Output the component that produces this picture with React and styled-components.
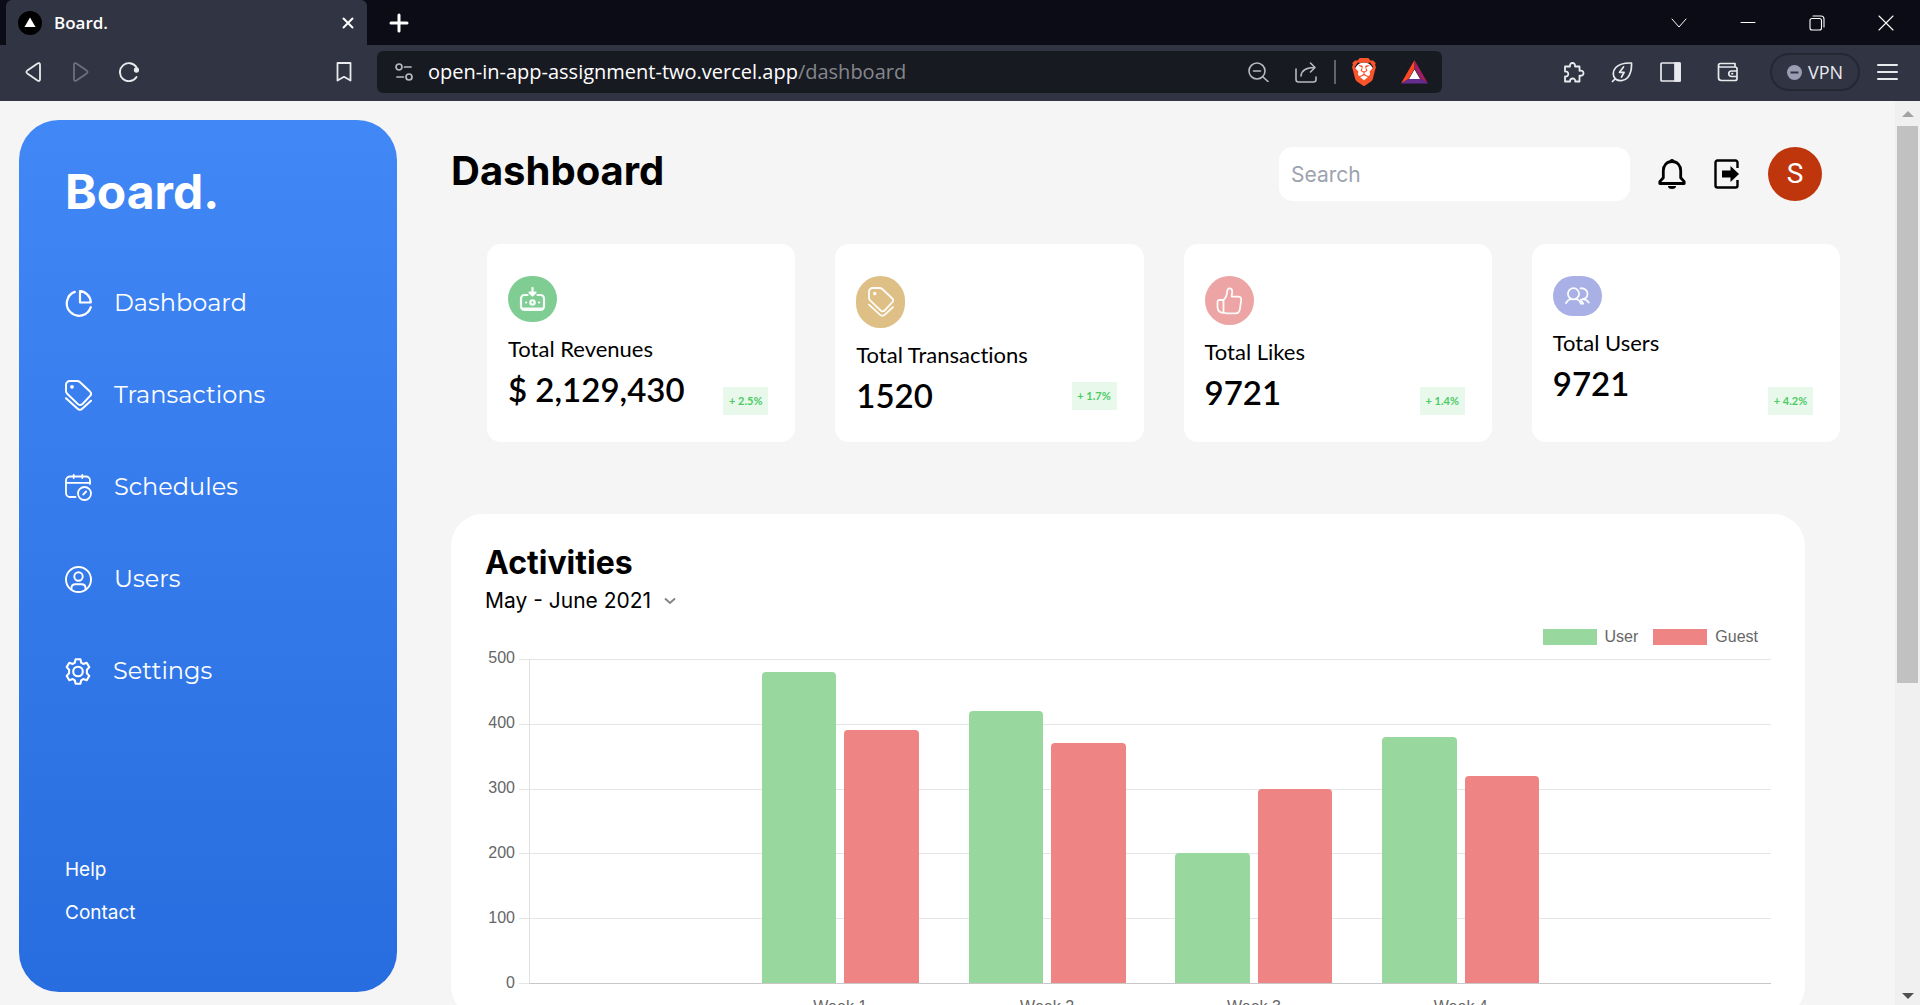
import React from "react";
import styled, { createGlobalStyle } from "styled-components";
import { SiBrave } from "react-icons/si";

const GlobalStyle = createGlobalStyle`
  *, *::before, *::after { box-sizing: border-box; }
  html, body { margin: 0; padding: 0; }
  body { font-family: Inter, sans-serif; color: #000; background: #f5f5f5; }
  button { border: 0; padding: 0; background: none; color: inherit; font: inherit; cursor: pointer; }
  h1, h2, p, ul { margin: 0; padding: 0; }
  svg { display: block; flex: none; }
`;

/* ---------- browser window ---------- */

const Window = styled.div`
  display: flex;
  flex-direction: column;
  height: 100vh;
  overflow: hidden;
`;

const TabStrip = styled.div`
  display: flex;
  align-items: stretch;
  height: 45px;
  flex: none;
  padding-left: 6px;
  background: #0b0c15;
  color: #fff;
`;

const Tab = styled.div`
  display: flex;
  align-items: center;
  width: 361px;
  padding: 0 7px 0 12px;
  border-radius: 6px 6px 0 0;
  background: #313442;
  font: 600 17px/24px "Open Sans", "Noto Sans", sans-serif;
`;

const TabTitle = styled.span`
  flex: 1;
  padding-left: 12px;
`;

const StripButton = styled.button`
  display: flex;
  align-items: center;
  justify-content: center;
  width: ${(p) => p.$width}px;
`;

const WindowControls = styled.div`
  display: flex;
  margin-left: auto;
`;

const Toolbar = styled.div`
  display: flex;
  align-items: center;
  height: 56px;
  flex: none;
  padding-bottom: 2px;
  background: #313442;
  color: #e9eaee;
`;

const ToolGroup = styled.div`
  display: flex;
  align-items: center;
  padding: 0 9px;
  width: ${(p) => p.$width}px;
  justify-content: ${(p) => p.$justify};
`;

const ToolSet = styled.div`
  display: flex;
  align-items: center;
  margin-right: ${(p) => p.$after || 0}px;
`;

const ToolButton = styled.button`
  display: flex;
  align-items: center;
  justify-content: center;
  width: 48px;
  height: 40px;
  color: ${(p) => p.$color || "inherit"};
`;

const AddressBar = styled.div`
  display: flex;
  align-items: center;
  flex: 1;
  height: 42px;
  padding: 0 4px 0 17px;
  border-radius: 6px;
  background: #181a22;
  color: #b9bac0;
`;

const Address = styled.div`
  flex: 1;
  padding-left: 14px;
  color: #fff;
  font: 400 20px/28px "Open Sans", "Noto Sans", sans-serif;
  white-space: nowrap;
`;

const AddressPath = styled.span`
  color: #85878d;
`;

const Divider = styled.span`
  width: 2px;
  height: 24px;
  margin: 0 4px;
  background: #62646b;
`;

const VpnButton = styled.button`
  display: flex;
  align-items: center;
  justify-content: center;
  gap: 6px;
  width: 90px;
  height: 38px;
  margin-right: 3px;
  border: 2px solid #252733;
  border-radius: 19px;
  font: 400 18px/24px "Open Sans", "Noto Sans", sans-serif;
`;

const Viewport = styled.div`
  display: flex;
  flex: 1;
  min-height: 0;
  background: #f5f5f5;
`;

const ScrollTrack = styled.div`
  display: flex;
  flex-direction: column;
  align-items: center;
  justify-content: space-between;
  width: 25px;
  flex: none;
  padding: 10px 2px 6px;
  background: #f0f0f0;
`;

const ScrollThumb = styled.div`
  width: 21px;
  height: 557px;
  margin: 9px 0 auto;
  background: #c1c1c1;
`;

/* ---------- sidebar ---------- */

const Sidebar = styled.aside`
  display: flex;
  flex-direction: column;
  width: 378px;
  flex: none;
  margin: 19px 0 13px 19px;
  padding: 42px 46px 67px;
  border-radius: 40px;
  background: linear-gradient(180deg, #4287f6 0%, #286ddf 100%);
  color: #fff;
`;

const Brand = styled.p`
  font-size: 48px;
  line-height: 60px;
  font-weight: 700;
`;

const Nav = styled.nav`
  display: flex;
  flex-direction: column;
  gap: 52px;
  margin-top: 61px;
`;

const NavLink = styled.a`
  display: flex;
  align-items: center;
  gap: 22px;
  height: 40px;
  color: #fff;
  text-decoration: none;
  font: 400 24px/40px Montserrat, Inter, sans-serif;
`;

const FootLinks = styled.div`
  display: flex;
  flex-direction: column;
  gap: 19px;
  margin-top: auto;
`;

const FootLink = styled.a`
  color: #fff;
  text-decoration: none;
  font-size: 19px;
  line-height: 24px;
`;

/* ---------- main column ---------- */

const Main = styled.main`
  flex: 1;
  min-width: 0;
  padding: 46px 0 0 54px;
`;

const Header = styled.header`
  display: flex;
  align-items: flex-start;
  justify-content: space-between;
  padding-right: 73px;
`;

const PageTitle = styled.h1`
  font-size: 40px;
  line-height: 48px;
  font-weight: 700;
`;

const HeaderTools = styled.div`
  display: flex;
  align-items: center;
  gap: 28px;
`;

const SearchBox = styled.input`
  width: 351px;
  height: 54px;
  padding: 0 12px;
  border: 0;
  border-radius: 14px;
  background: #fff;
  font: 400 21px/32px Inter, sans-serif;
  &::placeholder { color: #9ca3af; opacity: 1; }
`;

const Avatar = styled.button`
  width: 54px;
  height: 54px;
  border-radius: 50%;
  background: #bf360c;
  color: #fff;
  font: 400 28px/54px Roboto, sans-serif;
`;

const Stats = styled.section`
  display: grid;
  grid-template-columns: repeat(4, 1fr);
  gap: 40px;
  margin: 43px 55px 0 36px;
`;

const StatCard = styled.article`
  display: flex;
  justify-content: space-between;
  min-height: 198px;
  padding: 32px 27px 20px 21px;
  border-radius: 14px;
  background: #fff;
  font-family: Lato, sans-serif;
  font-variant-ligatures: none;
`;

const StatIcon = styled.div`
  display: flex;
  align-items: center;
  justify-content: center;
  width: 49px;
  height: ${(p) => p.$height}px;
  margin-bottom: 13px;
  border-radius: 25px;
  background: ${(p) => p.$color};
  color: #fffffff0;
`;

const StatLabel = styled.p`
  font-size: 22px;
  line-height: 28px;
`;

const StatValue = styled.p`
  font-size: 33px;
  line-height: 52px;
  font-weight: 600;
`;

const Change = styled.span`
  align-self: flex-end;
  margin-bottom: ${(p) => (p.$raised ? 12 : 7)}px;
  width: 45px;
  color: #4ccb65;
  background: #e8f8eb;
  font-size: 11px;
  line-height: 28px;
  font-weight: 700;
  text-align: center;
`;

const Activities = styled.section`
  margin: 72px 90px 0 0;
  padding: 29px 34px 0;
  border-radius: 32px;
  background: #fff;
`;

const SectionTitle = styled.h2`
  font-size: 32px;
  line-height: 40px;
  font-weight: 700;
`;

const Period = styled.label`
  display: flex;
  align-items: center;
  gap: 12px;
  width: fit-content;
  height: 36px;
`;

const PeriodSelect = styled.select`
  appearance: none;
  padding: 0;
  border: 0;
  background: none;
  color: #000;
  font: 400 21px/36px Inter, sans-serif;
`;

const Legend = styled.ul`
  display: flex;
  justify-content: flex-end;
  gap: 15px;
  margin-top: 6px;
  padding-right: 13px;
  list-style: none;
  color: #666;
  font: 400 16px/24px "Liberation Sans", Arial, sans-serif;
`;

const LegendItem = styled.li`
  display: flex;
  align-items: center;
  gap: 8px;
  &::before {
    content: "";
    width: 54px;
    height: 16px;
    background: ${(p) => p.$color};
  }
`;

const Chart = styled.div`
  display: grid;
  grid-template-columns: 30px 1fr;
  column-gap: 4px;
  margin-top: 10px;
  color: #666;
  font: 400 16px/20px "Liberation Sans", Arial, sans-serif;
`;

const Scale = styled.div`
  display: flex;
  flex-direction: column;
  justify-content: space-between;
  margin: -11px 0 -9px;
  text-align: right;
`;

const Plot = styled.div`
  display: grid;
  height: 325px;
`;

const GridLines = styled.div`
  grid-area: 1 / 1;
  display: flex;
  flex-direction: column;
  border-bottom: 1px solid #e5e5e5;
`;

const GridLine = styled.div`
  flex: 1;
  border-top: 1px solid #e5e5e5;
`;

const Weeks = styled.div`
  grid-area: 1 / 1;
  z-index: 1;
  display: grid;
  grid-template-columns: repeat(6, 1fr);
  margin-left: 10px;
  border-left: 1px solid #e0e0e0;
  border-bottom: 1px solid #c8c8c8;
`;

const Week = styled.div`
  display: flex;
  align-items: flex-end;
  gap: 8px;
  padding: 0 25px;
`;

const Bar = styled.div`
  flex: 1;
  border-radius: 4px 4px 0 0;
  background: ${(p) => p.$color};
`;

const WeekNames = styled.div`
  grid-column: 2;
  display: grid;
  grid-template-columns: repeat(6, 1fr);
  margin: 12px 0 0 11px;
  line-height: 22px;
  text-align: center;
`;

/* ---------- drawings ---------- */

const Icon = ({ w = 24, h = 24, box, sw = 2, children }) => (
  <svg width={w} height={h} viewBox={box || `0 0 ${w} ${h}`} fill="none" stroke="currentColor"
    strokeWidth={sw} strokeLinecap="round" strokeLinejoin="round" aria-hidden="true">
    {children}
  </svg>
);

const PieIcon = () => (
  <Icon w={27} h={27} sw={2.2}>
    <path d="M9.8 1.9A12.3 12.3 0 1 0 25.8 17.2" />
    <path d="M15 1.2c5.6.4 10.6 5 10.8 11.3H15Z" />
  </Icon>
);

const TagIcon = ({ w = 27, h = 31, sw = 2 }) => (
  <Icon w={w} h={h} box="0 0 27 31" sw={sw}>
    <path d="M1 4.8A3.8 3.8 0 0 1 4.8 1H12c1.200 0 2 .3 2.800 1L25 11.600c1.300 1.300 1.400 3 .1 4.300L17.800 23.800c-1.600 1.600-3.600 1.600-5.100.1L2.200 13.800C1.400 13 1 12.200 1 11.100Z" />
    <path d="M1 18.200 12.300 28.600c1.600 1.500 3.600 1.500 5.200 0L26 20.800" />
    <circle cx="7" cy="6.8" r="0.9" fill="currentColor" />
  </Icon>
);

const CalendarIcon = () => (
  <Icon w={27} h={27} sw={1.8}>
    <path d="M25 10V6.500a4 4 0 0 0-4-4H5a4 4 0 0 0-4 4V19a4 4 0 0 0 4 4h5.500M1 8.800h24M8.700 1v3M17.300 1v3" />
    <circle cx="19.500" cy="19.500" r="6.500" />
    <path d="m18.200 20.500 3-3" />
  </Icon>
);

const UserIcon = () => (
  <Icon w={27} h={27} sw={1.9}>
    <circle cx="13.500" cy="13.500" r="12.500" />
    <circle cx="13.500" cy="10.500" r="4.200" />
    <path d="M6.500 23.500V22c0-2.400 1.600-3.800 3.800-3.800h6.400c2.200 0 3.800 1.400 3.800 3.800v1.500" />
  </Icon>
);

const GearIcon = () => (
  <Icon w={26} h={27} sw={2.1}>
    <path d="M10.600 1.200h4.800l.8 3.500 2 1.200 3.500-1.100 2.600 4.300-2.400 2.600v3.600l2.400 2.600-2.600 4.300-3.500-1.100-2 1.200-.8 3.500h-4.800l-.8-3.500-2-1.200-3.500 1.100L1.700 17.900l2.400-2.600v-3.600L1.700 9.100l2.600-4.300 3.500 1.100 2-1.200Z" />
    <circle cx="13" cy="13.500" r="4.800" />
  </Icon>
);

const CashIcon = () => (
  <Icon w={27} h={25} sw={2.2}>
    <path d="M8.500 8H5.500A3.500 3.500 0 0 0 2 11.500v8A3.500 3.500 0 0 0 5.500 23h16a3.500 3.500 0 0 0 3.500-3.500v-8A3.500 3.500 0 0 0 21.500 8h-3M3.500 21.500h20" />
    <path d="M13.500 1v6" />
    <path d="m10.500 5.500 3 3 3-3Z" fill="currentColor" />
    <circle cx="13.500" cy="15.500" r="2.200" />
    <path d="M7 15.500h.2M20 15.500h.2" />
  </Icon>
);

const ThumbIcon = () => (
  <Icon w={27} h={28} sw={1.8}>
    <path d="M7.500 13c3-2 3.300-5 3.700-8.500.2-2 1-3.200 2.400-3.200 1.800 0 2.600 1.300 2.600 3.300 0 1.800-.5 3.400-.5 5h6.500c2.200 0 3.300 1.500 3 3.500l-1.300 9c-.4 2.700-1.800 4.200-4.400 4.200H11c-1.500 0-2.500-.3-3.500-1Z" />
    <path d="M7.500 13H3.200c-1.200 0-1.700.7-1.700 1.800v5c0 3.400 2 6 6 6" />
  </Icon>
);

const PeopleIcon = () => (
  <Icon w={25} h={18} sw={1.8}>
    <circle cx="8.500" cy="6.800" r="5.600" />
    <path d="M1 16c1-2 2.700-3.400 5-4M16.200 16.800c-1-2.300-2.800-4-5.200-4.800M15.500 1.300c4.400-.3 7 2.300 7 5.500s-1.900 5.200-5 5.400c3.100.1 4.900 1.300 6.300 3.300M15.800 12.600l2.400 4.200" />
  </Icon>
);

const BellIcon = () => (
  <svg width="28" height="30" viewBox="0 0 28 30" aria-hidden="true">
    <path d="M14 2.500c-5.200 0-8.700 3.900-8.700 9v7.200L1.800 22.600v1.900h24.400v-1.900l-3.500-3.900v-7.200c0-5.100-3.500-9-8.700-9Z" fill="none" stroke="#000" strokeWidth="2.800" strokeLinejoin="round" />
    <path d="M11.500 2.500a2.500 2.500 0 0 1 5 0ZM10 27h8a4 3 0 0 1-8 0Z" />
  </svg>
);

const ExitIcon = () => (
  <svg width="26" height="30" viewBox="0 0 26 30" aria-hidden="true">
    <path d="M23.500 9V3.500a2 2 0 0 0-2-2h-18a2 2 0 0 0-2 2v23a2 2 0 0 0 2 2h18a2 2 0 0 0 2-2V21" fill="none" stroke="#000" strokeWidth="2.4" />
    <path d="M8 11.500h8.500V7L25 15l-8.500 8v-4.500H8Z" />
  </svg>
);

const Brave = styled.span`
  display: flex;
  color: #fb542b;
  svg { background: radial-gradient(circle at 50% 50%, #fff 0 9px, transparent 10px); }
`;

const ScrollArrow = ({ down, color }) => (
  <svg width="12" height="6" viewBox="0 0 12 6" fill={color} aria-hidden="true">
    <path d={down ? "M0 0h12L6 6Z" : "M0 6h12L6 0Z"} />
  </svg>
);

/* ---------- content ---------- */

const NAV = [
  ["Dashboard", PieIcon],
  ["Transactions", TagIcon],
  ["Schedules", CalendarIcon],
  ["Users", UserIcon],
  ["Settings", GearIcon],
];

const STATS = [
  { label: "Total Revenues", value: "$ 2,129,430", change: "+ 2.5%", color: "#7fcd93", height: 46, icon: <CashIcon /> },
  { label: "Total Transactions", value: "1520", change: "+ 1.7%", color: "#debf85", height: 52, icon: <TagIcon w={26} h={30} sw={1.9} />, raised: true },
  { label: "Total Likes", value: "9721", change: "+ 1.4%", color: "#eca4a4", height: 49, icon: <ThumbIcon /> },
  { label: "Total Users", value: "9721", change: "+ 4.2%", color: "#a9b0e5", height: 40, icon: <PeopleIcon /> },
];

const USER = "#98d89e";
const GUEST = "#ee8484";
const MAX = 500;
const ACTIVITY = [
  { name: "" },
  { name: "Week 1", user: 480, guest: 390 },
  { name: "Week 2", user: 420, guest: 370 },
  { name: "Week 3", user: 200, guest: 300 },
  { name: "Week 4", user: 380, guest: 320 },
  { name: "" },
];

const percent = (v) => ({ height: `${(v / MAX) * 100}%` });

function BrowserTop() {
  return (
    <>
      <TabStrip>
        <Tab>
          <svg width="24" height="24" viewBox="0 0 24 24" aria-hidden="true">
            <circle cx="12" cy="12" r="12" fill="#000" />
            <path d="M12 6.500 17.500 16h-11Z" fill="#fff" />
          </svg>
          <TabTitle>Board.</TabTitle>
          <StripButton $width={24} aria-label="Close tab">
            <Icon w={12} h={12}><path d="m1.500 1.500 9 9m0-9-9 9" /></Icon>
          </StripButton>
        </Tab>
        <StripButton $width={64} aria-label="New tab">
          <Icon w={20} h={20} sw={3}><path d="M10 2v16M2 10h16" /></Icon>
        </StripButton>
        <WindowControls>
          <StripButton $width={69} aria-label="Search tabs">
            <Icon w={16} h={10} sw={1}><path d="m1 1 7 8 7-8" /></Icon>
          </StripButton>
          <StripButton $width={69} aria-label="Minimize">
            <Icon w={16} h={3} sw={1}><path d="M1 1.500h14" /></Icon>
          </StripButton>
          <StripButton $width={69} aria-label="Restore">
            <Icon w={16} h={16} sw={1.1}>
              <rect x="1" y="3.500" width="11.500" height="11.500" rx="2" />
              <path d="M4 1h8a3 3 0 0 1 3 3v8" />
            </Icon>
          </StripButton>
          <StripButton $width={69} aria-label="Close window">
            <Icon w={16} h={16} sw={1.1}><path d="m1 1 14 14M15 1 1 15" /></Icon>
          </StripButton>
        </WindowControls>
      </TabStrip>
      <Toolbar>
        <ToolGroup $width={377} $justify="space-between">
          <ToolSet>
            <ToolButton aria-label="Back">
              <Icon w={16} h={20} sw={1.8}><path d="M12.500 1.500 2.300 8.600c-1.200.9-1.200 1.900 0 2.800L12.500 18.500c1.400.9 2.500.4 2.500-1.200V2.700c0-1.600-1.100-2.100-2.500-1.200Z" /></Icon>
            </ToolButton>
            <ToolButton aria-label="Forward" $color="#6d707c">
              <Icon w={16} h={20} sw={1.8}><path d="M3.500 1.500 13.700 8.600c1.200.9 1.200 1.900 0 2.800L3.500 18.500C2.100 19.400 1 18.900 1 17.300V2.700C1 1.100 2.100.6 3.500 1.500Z" /></Icon>
            </ToolButton>
            <ToolButton aria-label="Reload">
              <Icon w={20} h={20} sw={1.9}>
                <path d="M17.500 5.300A9 9 0 1 0 17.500 15" />
                <circle cx="17.500" cy="8" r="1.700" fill="currentColor" />
              </Icon>
            </ToolButton>
          </ToolSet>
          <ToolButton aria-label="Bookmark">
            <Icon w={16} h={20} sw={1.8}><path d="M1.500 1h13v17.500L8 14.800l-6.500 3.700Z" /></Icon>
          </ToolButton>
        </ToolGroup>
        <AddressBar>
          <Icon w={20} h={18} sw={1.7}>
            <circle cx="5" cy="4" r="3" /><path d="M10.500 4H17" />
            <circle cx="15" cy="14" r="3" /><path d="M3 14h6.500" />
          </Icon>
          <Address>open-in-app-assignment-two.vercel.app<AddressPath>/dashboard</AddressPath></Address>
          <ToolButton aria-label="Zoom">
            <Icon w={21} h={20} sw={1.6}><circle cx="9" cy="9" r="8" /><path d="M5.500 9h7M15 15l5 4.500" /></Icon>
          </ToolButton>
          <ToolButton aria-label="Share">
            <Icon w={22} h={21} sw={1.6}><path d="M1 7v10.500C1 19 2 20 3.500 20h15c1.500 0 2.500-1 2.500-2.500V15M6 14c.5-5.500 4-8.500 14-8.500M15.500 1 20 5.500 15.500 10" /></Icon>
          </ToolButton>
          <Divider />
          <ToolSet $after={2}>
            <ToolButton aria-label="Brave Shields">
              <Brave><SiBrave size={28} /></Brave>
            </ToolButton>
          </ToolSet>
          <ToolButton aria-label="Brave Rewards">
            <svg width="27" height="24" viewBox="0 0 27 24" aria-hidden="true">
              <path d="M13.500 0v8.500L7.500 19 0 23.500Z" fill="#ff4724" />
              <path d="M13.500 0 27 23.500 19.500 19l-6-10.500Z" fill="#9e1f63" />
              <path d="M0 23.500 7.500 19h12l7.500 4.500Z" fill="#662d91" />
              <path d="m13.500 9.500 5.500 9.500H8Z" fill="#fff" />
            </svg>
          </ToolButton>
        </AddressBar>
        <ToolGroup $width={478} $justify="flex-end">
          <ToolSet $after={10}>
            <ToolButton aria-label="Extensions">
              <Icon w={22} h={21} sw={1.8}><path d="M2 4.500h5c-.5-2 .8-3.500 2.500-3.500S12.500 2.500 12 4.500h4.500v4.300c2.500-.6 4 .6 4 2.400s-1.500 3-4 2.400V19.500h-4.300c.3-2-.9-3-2.500-3s-2.900 1-2.600 3H2v-5c2 .4 3.300-.8 3.300-2.500S4 9.200 2 9.500Z" /></Icon>
            </ToolButton>
            <ToolButton aria-label="Energy saver">
              <Icon w={22} h={21} sw={1.7}>
                <path d="M1.500 19.500 4 17M20.500 1C13 .8 8 2 4.800 5.500 1.500 9 1.500 14.500 4.500 17s9 2.300 12-1.200C19.800 12 20.800 7 20.500 1Z" />
                <path d="m12.500 5-4 5.300h4.600L10.500 15" />
              </Icon>
            </ToolButton>
            <ToolButton aria-label="Side panel">
              <Icon w={21} h={20} sw={1.7}>
                <rect x="1" y="1" width="19" height="18" rx="1" />
                <path d="M15 1h5v18h-5Z" fill="currentColor" />
              </Icon>
            </ToolButton>
          </ToolSet>
          <ToolSet $after={18}>
            <ToolButton aria-label="Wallet">
              <Icon w={22} h={20} sw={1.7}>
                <path d="M1.500 3.500v12a3 3 0 0 0 3 3h13.500a2 2 0 0 0 2-2V7a2 2 0 0 0-2-2H3a1.500 1.500 0 0 1-1.500-1.500v0c0-1.400.9-2 2-2H18V5M20 9h-5.500a2.500 2.500 0 0 0 0 5.500H20M15 11.700h.5" />
              </Icon>
            </ToolButton>
          </ToolSet>
          <VpnButton>
            <svg width="15" height="15" viewBox="0 0 15 15" aria-hidden="true">
              <circle cx="7.500" cy="7.500" r="7.500" fill="#9a9db3" />
              <path d="M3.500 7.500h8" stroke="#313442" strokeWidth="2" />
            </svg>
            VPN
          </VpnButton>
          <ToolButton aria-label="Menu">
            <Icon w={21} h={18} sw={2}><path d="M1 2h19M1 9h19M1 16h19" /></Icon>
          </ToolButton>
        </ToolGroup>
      </Toolbar>
    </>
  );
}

function ActivityChart() {
  return (
    <Chart>
      <Scale>
        {[500, 400, 300, 200, 100, 0].map((n) => <span key={n}>{n}</span>)}
      </Scale>
      <Plot>
        <GridLines>
          {[5, 4, 3, 2, 1].map((n) => <GridLine key={n} />)}
        </GridLines>
        <Weeks>
          {ACTIVITY.map((week, i) => (
            <Week key={i}>
              {week.name && (
                <>
                  <Bar $color={USER} style={percent(week.user)} />
                  <Bar $color={GUEST} style={percent(week.guest)} />
                </>
              )}
            </Week>
          ))}
        </Weeks>
      </Plot>
      <WeekNames>
        {ACTIVITY.map((week, i) => <span key={i}>{week.name}</span>)}
      </WeekNames>
    </Chart>
  );
}

export default function App() {
  return (
    <Window>
      <GlobalStyle />
      <BrowserTop />
      <Viewport>
        <Sidebar>
          <Brand>Board.</Brand>
          <Nav>
            {NAV.map(([name, Glyph]) => (
              <NavLink href="#" key={name}>
                <Glyph />
                {name}
              </NavLink>
            ))}
          </Nav>
          <FootLinks>
            <FootLink href="#">Help</FootLink>
            <FootLink href="#">Contact</FootLink>
          </FootLinks>
        </Sidebar>
        <Main>
          <Header>
            <PageTitle>Dashboard</PageTitle>
            <HeaderTools>
              <SearchBox type="search" placeholder="Search" aria-label="Search" />
              <button aria-label="Notifications"><BellIcon /></button>
              <button aria-label="Sign out"><ExitIcon /></button>
              <Avatar>S</Avatar>
            </HeaderTools>
          </Header>
          <Stats>
            {STATS.map((s) => (
              <StatCard key={s.label}>
                <div>
                  <StatIcon $color={s.color} $height={s.height}>{s.icon}</StatIcon>
                  <StatLabel>{s.label}</StatLabel>
                  <StatValue>{s.value}</StatValue>
                </div>
                <Change $raised={s.raised}>{s.change}</Change>
              </StatCard>
            ))}
          </Stats>
          <Activities>
            <SectionTitle>Activities</SectionTitle>
            <Period>
              <PeriodSelect aria-label="Period">
                <option>May - June 2021</option>
              </PeriodSelect>
              <svg width="12" height="8" viewBox="0 0 12 8" fill="none" stroke="#858585" strokeWidth="2" aria-hidden="true">
                <path d="m1 1.500 5 4.500 5-4.500" />
              </svg>
            </Period>
            <Legend>
              <LegendItem $color={USER}>User</LegendItem>
              <LegendItem $color={GUEST}>Guest</LegendItem>
            </Legend>
            <ActivityChart />
          </Activities>
        </Main>
        <ScrollTrack>
          <ScrollArrow color="#a3a3a3" />
          <ScrollThumb />
          <ScrollArrow down color="#505050" />
        </ScrollTrack>
      </Viewport>
    </Window>
  );
}
